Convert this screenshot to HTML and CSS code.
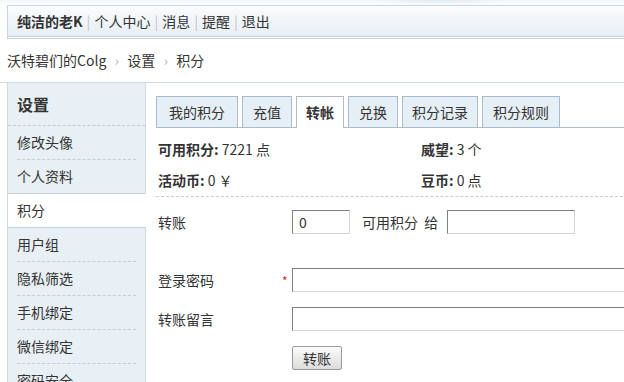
FILE: index.html
```html
<!DOCTYPE html>
<html>
<head>
  <meta charset="UTF-8">
  <title>积分 - 设置</title>
  <link rel="stylesheet" href="styles.css">
</head>
<body>

  <div class="wrap">
    <div class="topbar">
      <strong>纯洁的老K</strong><span class="sep">|</span><a href="#">个人中心</a><span class="sep">|</span><a href="#">消息</a><span class="sep">|</span><a href="#">提醒</a><span class="sep">|</span><a href="#">退出</a>
    </div>

    <div class="crumb">
      <a href="#">沃特碧们的Colg</a><span class="arr">›</span><a href="#">设置</a><span class="arr">›</span><span>积分</span>
    </div>

    <div class="main">
      <div class="side">
        <h2>设置</h2>
        <ul class="menu">
          <li><a href="#">修改头像</a></li>
          <li><a href="#">个人资料</a></li>
          <li class="on"><a href="#">积分</a></li>
          <li><a href="#">用户组</a></li>
          <li><a href="#">隐私筛选</a></li>
          <li><a href="#">手机绑定</a></li>
          <li><a href="#">微信绑定</a></li>
          <li><a href="#">密码安全</a></li>
        </ul>
      </div>

      <div class="content">
        <ul class="tabs">
          <li class="t1"><a href="#">我的积分</a></li>
          <li><a href="#">充值</a></li>
          <li class="on"><a href="#">转帐</a></li>
          <li><a href="#">兑换</a></li>
          <li class="t5"><a href="#">积分记录</a></li>
          <li><a href="#">积分规则</a></li>
        </ul>

        <div class="stats">
          <div><b>可用积分:</b> 7221 点</div>
          <div><b>威望:</b> 3 个</div>
          <div><b>活动币:</b> 0 ￥</div>
          <div><b>豆币:</b> 0 点</div>
        </div>

        <form class="form">
          <div class="row first">
            <label class="lbl">转账</label>
            <span class="star"></span>
            <input type="text" class="px short" value="0">
            <span class="note">可用积分&nbsp;&nbsp;给</span>
            <input type="text" class="px mid">
          </div>
          <div class="row">
            <label class="lbl">登录密码</label>
            <span class="star">*</span>
            <input type="password" class="px long">
          </div>
          <div class="row">
            <label class="lbl">转账留言</label>
            <span class="star"></span>
            <input type="text" class="px long">
          </div>
          <div class="row">
            <span class="lbl"></span>
            <span class="star"></span>
            <button type="button" class="btn">转账</button>
          </div>
        </form>
      </div>
    </div>
  </div>

</body>
</html>
```

FILE: styles.css
```css
body {
  margin: 0;
  padding: 0;
  font-family: "Noto Sans CJK SC", "Noto Sans", sans-serif;
  font-size: 14px;
  color: #333;
  background: #fff;
  overflow: hidden;
}

a {
  color: #333;
  text-decoration: none;
}

ul {
  list-style: none;
  margin: 0;
  padding: 0;
}

.wrap {
  padding: 5px 0 0 7px;
  margin-right: -4px;
  background:
    radial-gradient(ellipse 70px 5px at 440px 0, #dfeaf1, rgba(255,255,255,0)),
    linear-gradient(to bottom, #f2f6f9 0, #fff 5px);
}

.topbar {
  height: 30px;
  line-height: 30px;
  padding-left: 9px;
  border: 1px solid #c8d6e0;
  border-bottom: 3px double #c8d6e0;
  background: linear-gradient(to bottom, #fbfdfe, #e6eef5);
}

.topbar strong {
  font-weight: bold;
}

.sep {
  color: #c4c4c4;
  margin: 0 4px;
}

.crumb {
  height: 43px;
  line-height: 42px;
}

.arr {
  display: inline-block;
  width: 21px;
  text-align: center;
  color: #b0b0b0;
}

.main {
  display: flex;
  margin-left: -7px;
  padding-left: 7px;
  border-top: 1px solid #cfdbe3;
}

.side {
  width: 137px;
  flex: none;
  background: #e8eff5;
  border-left: 1px solid #cfdbe3;
  border-right: 1px solid #cfdbe3;
  min-height: 320px;
}

.side h2 {
  margin: 0;
  height: 42px;
  line-height: 42px;
  padding-left: 9px;
  font-size: 16px;
  font-weight: bold;
  border-bottom: 1px dashed #c0c8d0;
}

.menu li {
  padding: 0 9px;
}

.menu li a {
  display: block;
  height: 33px;
  line-height: 33px;
  border-top: 1px dashed #c6ccd2;
}

.menu li:first-child a {
  border-top: none;
  height: 33px;
}

.menu li.on {
  background: #fff;
  margin-right: -1px;
  border-top: 1px solid #c2d2de;
  border-bottom: 1px solid #c2d2de;
}

.menu li.on a {
  border-top: none;
}

.menu li.on + li a {
  border-top: none;
}

.content {
  flex: 1;
  padding: 13px 0 0 10px;
}

.tabs {
  display: flex;
  gap: 4px;
  border-bottom: 1px solid #a9bccb;
  height: 31px;
}

.tabs li {
  height: 30px;
  line-height: 30px;
  padding: 0 10px;
  border: 1px solid #a9bccb;
  border-bottom: none;
  background: #e6eef6;
}

.tabs li.t1 {
  padding: 0 12px;
}

.tabs li.t5 {
  padding: 0 9px;
}

.tabs li.on {
  background: #fff;
  height: 31px;
  padding: 0 9px;
  font-weight: bold;
}

.stats {
  display: grid;
  grid-template-columns: 263px auto;
  padding: 6px 0 0 2px;
  line-height: 31px;
  border-bottom: 1px dashed #c6ccd2;
}

.stats b {
  font-weight: bold;
}

.form {
  padding: 13px 0 0 2px;
}

.row {
  display: flex;
  align-items: center;
  margin-bottom: 15px;
}

.row.first {
  margin-bottom: 34px;
}

.lbl {
  width: 124px;
  flex: none;
}

.star {
  width: 10px;
  flex: none;
  color: #e22;
  font-size: 12px;
}

.px {
  box-sizing: border-box;
  height: 24px;
  padding: 0 6px;
  border: 1px solid;
  border-color: #7f7f7f #d6d6d6 #d6d6d6 #7f7f7f;
  font-family: inherit;
  font-size: 14px;
  color: #333;
  background: #fff;
}

.short {
  width: 58px;
}

.mid {
  width: 128px;
}

.long {
  flex: 1;
}

.note {
  margin: 0 9px 0 12px;
}

.btn {
  height: 24px;
  width: 50px;
  padding: 0;
  font-family: inherit;
  font-size: 14px;
  color: #333;
  border: 1px solid #9a9a9a;
  border-radius: 2px;
  background: linear-gradient(to bottom, #fbfbfb, #dcdcdc);
}
```
